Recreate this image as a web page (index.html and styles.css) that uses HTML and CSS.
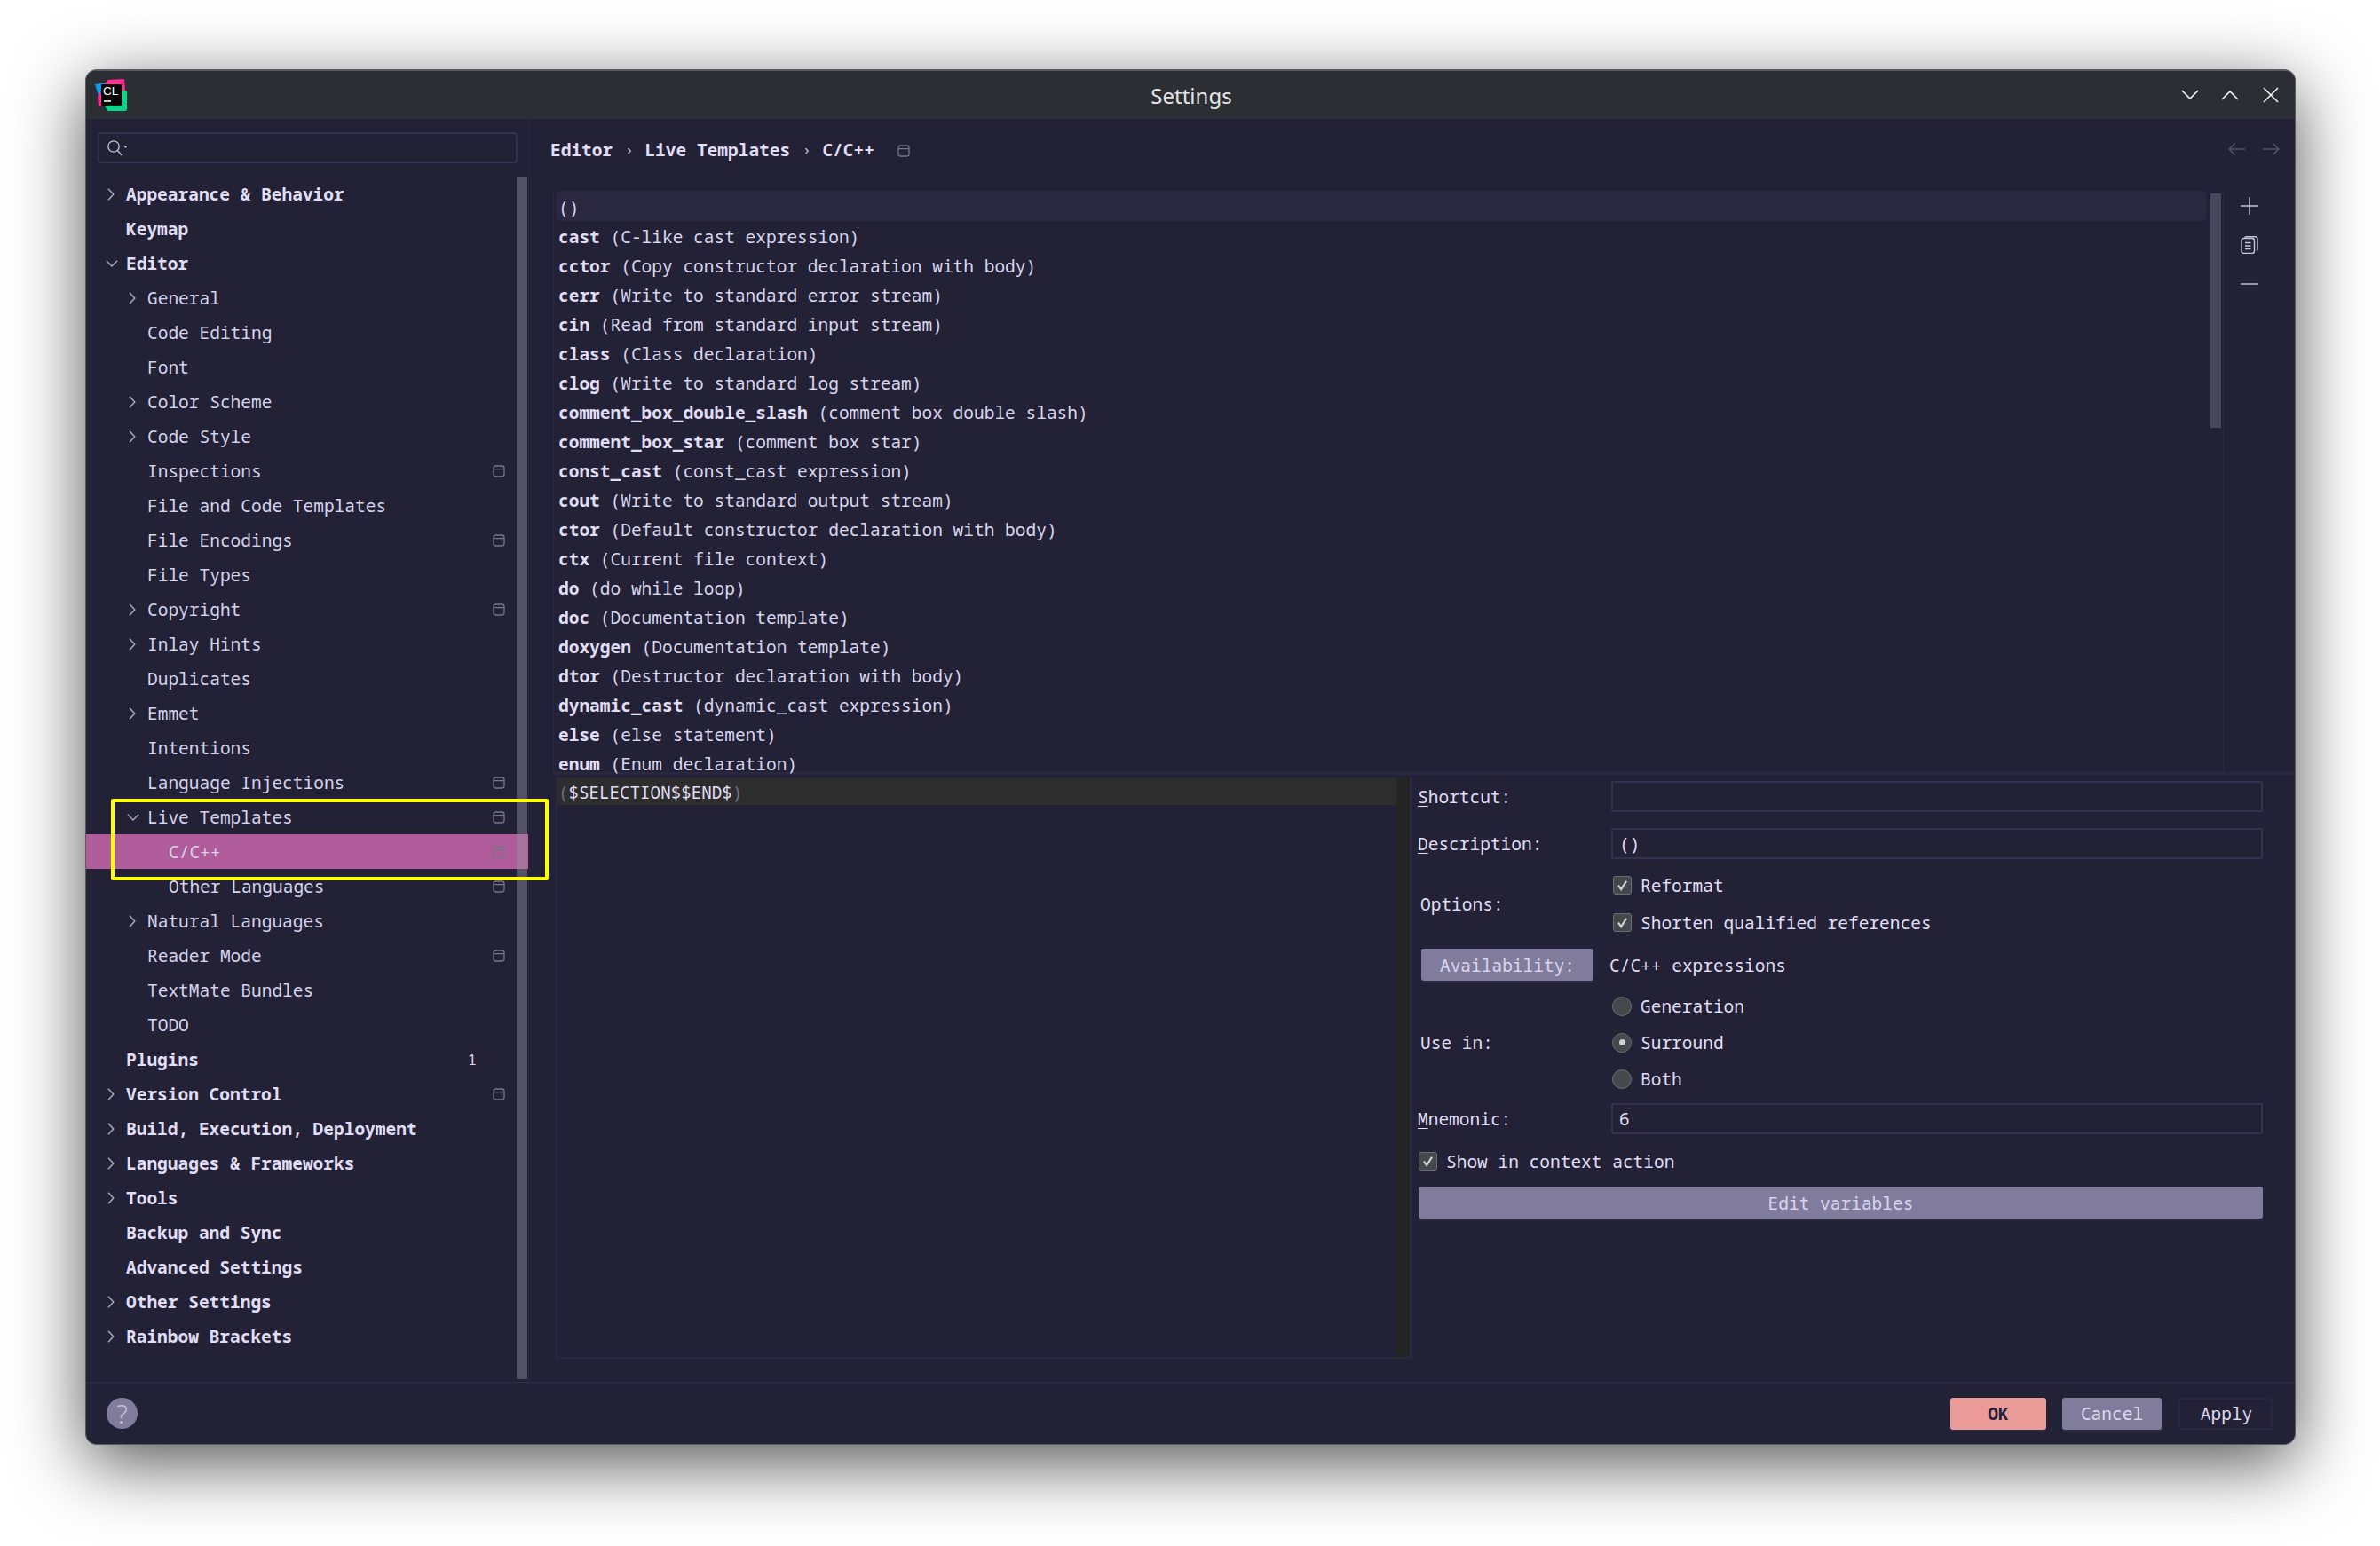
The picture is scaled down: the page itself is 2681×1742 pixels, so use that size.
FILE: index.html
```html
<!DOCTYPE html>
<html lang="en">
<head>
<meta charset="utf-8">
<title>Settings</title>
<link rel="stylesheet" href="styles.css">
</head>
<body>
<svg class="defs" width="0" height="0" aria-hidden="true">
  <symbol id="cr" viewBox="0 0 14 14"><path d="M3 .8 8.8 7 3 13.2" fill="none" stroke="#a9a7bd" stroke-width="1.5"/></symbol>
  <symbol id="cd" viewBox="0 0 14 14"><path d="M.8 3.8 7 10l6.2-6.2" fill="none" stroke="#a9a7bd" stroke-width="1.5"/></symbol>
  <symbol id="proj" viewBox="0 0 14 14"><rect x="1" y="1" width="12" height="12" rx="2.4" fill="none" stroke="#77758a" stroke-width="1.3"/><path d="M1 4.6h12" stroke="#77758a" stroke-width="1.3"/></symbol>
  <symbol id="tick" viewBox="0 0 20 20"><path d="M5.2 10.2 8.6 14.8 14.8 5" fill="none" stroke="#cfd0d4" stroke-width="2.4"/></symbol>
</svg>
<div class="window">
  <header class="titlebar">
    <svg class="logo" viewBox="0 0 36 36" aria-hidden="true">
      <path d="M0 6 22 3 14 28 6 26Z" fill="#0a9be8"/>
      <path d="M14 1 33 0 34 13 22 30 4 31 3 20Z" fill="#ff2d90"/>
      <path d="M17 14 34 13Q36 13 36 15V34Q36 36 34 36H14L11 30Z" fill="#0ad58a"/>
      <rect x="7" y="6" width="23" height="24" fill="#000"/>
      <path d="M10 25h8" stroke="#fff" stroke-width="1.6"/>
      <text x="9" y="18" class="logo-text">CL</text>
    </svg>
    <div class="title">Settings</div>
    <div class="winctl">
      <svg viewBox="0 0 20 14" class="wc" aria-hidden="true"><path d="M1 2l9 9 9-9" /></svg>
      <svg viewBox="0 0 20 14" class="wc" aria-hidden="true"><path d="M1 12l9-9 9 9" /></svg>
      <svg viewBox="0 0 18 18" class="wx" aria-hidden="true"><path d="M1 1l16 16M17 1 1 17" /></svg>
    </div>
  </header>
  <div class="body">
    <aside class="sidebar">
      <div class="search">
        <svg class="search-icon" viewBox="0 0 24 20" aria-hidden="true"><circle cx="8" cy="8" r="6.2" fill="none" stroke="#c9c8d6" stroke-width="1.3"/><path d="M12.5 12.6 17 18" stroke="#c9c8d6" stroke-width="1.3"/><path d="M19 7h5l-2.5 3z" fill="#c9c8d6"/></svg>
      </div>
      <div class="tree">
        <div class="row d0 b"><svg class="ch"><use href="#cr"/></svg><span>Appearance &amp; Behavior</span></div>
        <div class="row d0 b"><span class="ns"></span><span>Keymap</span></div>
        <div class="row d0 b"><svg class="ch"><use href="#cd"/></svg><span>Editor</span></div>
        <div class="row d1"><svg class="ch"><use href="#cr"/></svg><span>General</span></div>
        <div class="row d1"><span class="ns"></span><span>Code Editing</span></div>
        <div class="row d1"><span class="ns"></span><span>Font</span></div>
        <div class="row d1"><svg class="ch"><use href="#cr"/></svg><span>Color Scheme</span></div>
        <div class="row d1"><svg class="ch"><use href="#cr"/></svg><span>Code Style</span></div>
        <div class="row d1"><span class="ns"></span><span>Inspections</span><svg class="pj"><use href="#proj"/></svg></div>
        <div class="row d1"><span class="ns"></span><span>File and Code Templates</span></div>
        <div class="row d1"><span class="ns"></span><span>File Encodings</span><svg class="pj"><use href="#proj"/></svg></div>
        <div class="row d1"><span class="ns"></span><span>File Types</span></div>
        <div class="row d1"><svg class="ch"><use href="#cr"/></svg><span>Copyright</span><svg class="pj"><use href="#proj"/></svg></div>
        <div class="row d1"><svg class="ch"><use href="#cr"/></svg><span>Inlay Hints</span></div>
        <div class="row d1"><span class="ns"></span><span>Duplicates</span></div>
        <div class="row d1"><svg class="ch"><use href="#cr"/></svg><span>Emmet</span></div>
        <div class="row d1"><span class="ns"></span><span>Intentions</span></div>
        <div class="row d1"><span class="ns"></span><span>Language Injections</span><svg class="pj"><use href="#proj"/></svg></div>
        <div class="row d1"><svg class="ch"><use href="#cd"/></svg><span>Live Templates</span><svg class="pj"><use href="#proj"/></svg></div>
        <div class="row d2 sel"><span class="ns"></span><span>C/C++</span><svg class="pj"><use href="#proj"/></svg></div>
        <div class="row d2"><span class="ns"></span><span>Other Languages</span><svg class="pj"><use href="#proj"/></svg></div>
        <div class="row d1"><svg class="ch"><use href="#cr"/></svg><span>Natural Languages</span></div>
        <div class="row d1"><span class="ns"></span><span>Reader Mode</span><svg class="pj"><use href="#proj"/></svg></div>
        <div class="row d1"><span class="ns"></span><span>TextMate Bundles</span></div>
        <div class="row d1"><span class="ns"></span><span>TODO</span></div>
        <div class="row d0 b"><span class="ns"></span><span>Plugins</span><span class="count">1</span></div>
        <div class="row d0 b"><svg class="ch"><use href="#cr"/></svg><span>Version Control</span><svg class="pj"><use href="#proj"/></svg></div>
        <div class="row d0 b"><svg class="ch"><use href="#cr"/></svg><span>Build, Execution, Deployment</span></div>
        <div class="row d0 b"><svg class="ch"><use href="#cr"/></svg><span>Languages &amp; Frameworks</span></div>
        <div class="row d0 b"><svg class="ch"><use href="#cr"/></svg><span>Tools</span></div>
        <div class="row d0 b"><span class="ns"></span><span>Backup and Sync</span></div>
        <div class="row d0 b"><span class="ns"></span><span>Advanced Settings</span></div>
        <div class="row d0 b"><svg class="ch"><use href="#cr"/></svg><span>Other Settings</span></div>
        <div class="row d0 b"><svg class="ch"><use href="#cr"/></svg><span>Rainbow Brackets</span></div>
      </div>
      <div class="side-scroll"></div>
      <div class="highlight"></div>
    </aside>
    <main class="main">
      <div class="crumbs">
        <span class="crumb">Editor</span><span class="sep">›</span><span class="crumb">Live Templates</span><span class="sep">›</span><span class="crumb">C/C++</span>
        <svg class="pj crumb-pj"><use href="#proj"/></svg>
        <div class="nav">
          <svg viewBox="0 0 20 16" aria-hidden="true"><path d="M20 8H1.5M8 1 1.2 8 8 15"/></svg>
          <svg viewBox="0 0 20 16" aria-hidden="true"><path d="M0 8h18.5M12 1l6.8 7L12 15"/></svg>
        </div>
      </div>
      <div class="top">
        <div class="list">
          <div class="item first">()</div>
          <div class="item"><b>cast</b> (C-like cast expression)</div>
          <div class="item"><b>cctor</b> (Copy constructor declaration with body)</div>
          <div class="item"><b>cerr</b> (Write to standard error stream)</div>
          <div class="item"><b>cin</b> (Read from standard input stream)</div>
          <div class="item"><b>class</b> (Class declaration)</div>
          <div class="item"><b>clog</b> (Write to standard log stream)</div>
          <div class="item"><b>comment_box_double_slash</b> (comment box double slash)</div>
          <div class="item"><b>comment_box_star</b> (comment box star)</div>
          <div class="item"><b>const_cast</b> (const_cast expression)</div>
          <div class="item"><b>cout</b> (Write to standard output stream)</div>
          <div class="item"><b>ctor</b> (Default constructor declaration with body)</div>
          <div class="item"><b>ctx</b> (Current file context)</div>
          <div class="item"><b>do</b> (do while loop)</div>
          <div class="item"><b>doc</b> (Documentation template)</div>
          <div class="item"><b>doxygen</b> (Documentation template)</div>
          <div class="item"><b>dtor</b> (Destructor declaration with body)</div>
          <div class="item"><b>dynamic_cast</b> (dynamic_cast expression)</div>
          <div class="item"><b>else</b> (else statement)</div>
          <div class="item"><b>enum</b> (Enum declaration)</div>
          <div class="list-scroll"></div>
        </div>
        <div class="tools">
          <svg viewBox="0 0 20 20" aria-hidden="true"><path d="M10 0v20M0 10h20"/></svg>
          <svg viewBox="0 0 20 20" aria-hidden="true"><rect x="1" y="2.5" width="14.5" height="17" rx="2.5"/><path d="M5 2V1.5Q5 .7 6 .7H16.5Q19 .7 19 3V15Q19 16 18 16M5 7.5h6.5M5 11h6.5M5 14.5h6.5"/></svg>
          <svg viewBox="0 0 20 20" aria-hidden="true"><path d="M0 10h20"/></svg>
        </div>
      </div>
      <div class="bottom">
        <div class="editor">
          <div class="code">
            <div class="curline"><i>(</i>$SELECTION$$END$<i>)</i></div>
          </div>
          <div class="gutter"></div>
        </div>
        <form class="form">
          <div class="f-row h35 mb18"><label class="lab l-tight"><u>S</u>hortcut:</label><div class="input"></div></div>
          <div class="f-row h35 mb8"><label class="lab l-tight"><u>D</u>escription:</label><div class="input indent">()</div></div>
          <div class="f-row h84">
            <label class="lab">Options:</label>
            <div class="stack">
              <div class="opt"><span class="cb"><svg viewBox="0 0 20 20"><use href="#tick"/></svg></span>Reformat</div>
              <div class="opt"><span class="cb"><svg viewBox="0 0 20 20"><use href="#tick"/></svg></span>Shorten qualified references</div>
            </div>
          </div>
          <div class="f-row h36 mt9 mb8"><button type="button" class="btn avail">Availability:</button><span class="avail-text">C/C++ expressions</span></div>
          <div class="f-row h123">
            <label class="lab">Use in:</label>
            <div class="stack">
              <div class="opt o41"><span class="rd"></span>Generation</div>
              <div class="opt o41"><span class="rd on"></span>Surround</div>
              <div class="opt o41"><span class="rd"></span>Both</div>
            </div>
          </div>
          <div class="f-row h35 mt7"><label class="lab l-tight"><u>M</u>nemonic:</label><div class="input">6</div></div>
          <div class="f-row h42 mt9"><div class="opt"><span class="cb cb-left"><svg viewBox="0 0 20 20"><use href="#tick"/></svg></span>Show in context action</div></div>
          <button type="button" class="btn edit">Edit variables</button>
        </form>
      </div>
    </main>
  </div>
  <footer class="footer">
    <div class="help">?</div>
    <div class="actions">
      <button type="button" class="fb ok">OK</button>
      <button type="button" class="fb cancel">Cancel</button>
      <button type="button" class="fb apply">Apply</button>
    </div>
  </footer>
</div>
</body>
</html>
```

FILE: styles.css
```css
* { box-sizing: border-box; }
html, body { margin: 0; padding: 0; height: 1742px; overflow: hidden; background: #fff; }
body { padding: 78px 0 0 96px; font-family: "Noto Sans Mono", "Noto Sans Mono CJK SC", "DejaVu Sans Mono", monospace; font-size: 19.5px; color: #e0def4; }
.defs { position: absolute; }
.window { width: 2490px; height: 1550px; border: 1px solid #5a5b60; border-top: 2px solid #5a5b60; border-radius: 13px; background: #232136; display: flex; flex-direction: column; box-shadow: 0 20px 80px rgba(0,0,0,.68); }
.titlebar { height: 54px; flex: none; background: #2b2e32; display: flex; align-items: center; border-radius: 11px 11px 0 0; padding: 0 18px 0 10px; }
.logo { width: 36px; height: 36px; flex: none; }
.logo-text { font-family: "Liberation Sans", sans-serif; font-size: 13.5px; font-weight: 400; fill: #fff; }
.title { flex: 1; text-align: center; font-family: "Noto Sans", sans-serif; font-size: 24px; color: #e4e4e6; padding-left: 84px; }
.winctl { display: flex; align-items: center; gap: 25px; }
.winctl svg { fill: none; stroke: #f2f2f4; stroke-width: 1.6; display: block; }
.wc { width: 20px; height: 14px; }
.wx { width: 18px; height: 18px; margin-left: 2px; }
.body { flex: 1; display: flex; min-height: 0; }
.sidebar { width: 499px; flex: none; position: relative; border-right: 1px solid #2a283e; padding-top: 15px; }
.search { height: 35px; margin: 0 12px 0 13px; border: 2px solid #353250; border-radius: 4px; display: flex; align-items: center; padding-left: 8px; }
.search-icon { width: 24px; height: 20px; }
.tree { margin-top: 15px; }
.row { height: 39px; display: flex; align-items: center; padding-right: 26px; color: #d5d3ea; white-space: pre; }
.row.b { font-weight: 700; color: #e0def4; }
.d0 { padding-left: 22px; }
.d1 { padding-left: 46px; }
.d2 { padding-left: 70px; }
.row.sel { background: #b05c9b; }
.ch, .ns { width: 14px; height: 14px; margin-right: 9px; flex: none; }
.pj { width: 14px; height: 14px; flex: none; }
.row .pj { margin-left: auto; }
.count { margin-left: auto; font-weight: 400; font-size: 17px; margin-right: 32px; color: #d5d3ea; }
.side-scroll { position: absolute; left: 485px; top: 66px; width: 12px; height: 1354px; background: rgba(150,150,165,.42); }
.highlight { position: absolute; left: 28px; top: 766px; width: 493px; height: 92px; border: 4px solid #ffff00; border-radius: 2px; pointer-events: none; }
.main { flex: 1; min-width: 0; display: flex; flex-direction: column; padding-left: 27px; }
.crumbs { height: 81px; display: flex; align-items: center; padding: 0 17px 13px 0; font-weight: 700; white-space: pre; flex: none; }
.crumb:first-child { margin-left: -3px; }
.sep { font-weight: 400; font-size: 17px; margin: 0 12.5px 0 13.5px; color: #c9c7de; }
.crumb-pj { margin-left: 26px; margin-top: 3px; }
.nav { margin-left: auto; display: flex; gap: 20px; }
.nav svg { width: 19px; height: 16px; fill: none; stroke: #55555f; stroke-width: 1.5; display: block; }
.top { height: 658px; flex: none; display: flex; border-bottom: 3px solid #2a283e; }
.list { width: 1882px; flex: none; position: relative; border-left: 1px solid #2a283e; border-right: 1px solid #2a283e; padding: 0 18px 0 2px; }
.item { height: 33px; display: flex; align-items: center; padding-left: 3px; color: #d8d6ec; white-space: pre; overflow: hidden; }
.item b { color: #e0def4; }
.item.first { height: 34px; background: #2a283e; border-radius: 6px; margin-bottom: 1px; padding-top: 3px; }
.list-scroll { position: absolute; right: 2px; top: 3px; width: 12px; height: 264px; background: #47465a; }
.tools { flex: 1; display: flex; flex-direction: column; align-items: center; padding: 7px 22px 0 0; gap: 24px; margin-left: -1px; }
.tools svg { width: 20px; height: 20px; fill: none; stroke: #c8c7d6; stroke-width: 1.4; display: block; }
.bottom { flex: 1; min-height: 0; display: flex; padding-top: 4px; padding-right: 36px; }
.editor { width: 965px; height: 654px; flex: none; display: flex; border-left: 2px solid #2a283e; border-right: 3px solid #2c2a45; border-bottom: 2px solid #2a283e; margin-left: 3px; }
.code { flex: 1; font-size: 19.2px; }
.curline { height: 30px; background: #2d2d2e; display: flex; align-items: center; padding-left: 1px; white-space: pre; }
.curline i { font-style: normal; color: #6e6a86; }
.gutter { width: 15px; flex: none; background: #252525; }
.form { flex: 1; min-width: 0; padding: 3px 0 0 6px; display: flex; flex-direction: column; }
.f-row { display: flex; align-items: center; flex: none; }
.h35 { height: 35px; } .h36 { height: 36px; } .h42 { height: 42px; } .h84 { height: 84px; } .h123 { height: 123px; }
.mb18 { margin-bottom: 18px; } .mb8 { margin-bottom: 8px; }
.mt9 { margin-top: 9px; } .mt7 { margin-top: 7px; }
.lab { width: 218px; flex: none; padding-left: 3px; }
.l-tight { padding-left: 0; }
.lab u { text-underline-offset: 3px; text-decoration-thickness: 1px; }
.input { flex: 1; height: 35px; border: 2px solid #353250; border-radius: 2px; display: flex; align-items: center; padding-left: 7px; }
.indent { padding-left: 7px; }
.stack { display: flex; flex-direction: column; }
.opt { height: 42px; display: flex; align-items: center; white-space: pre; }
.o41 { height: 41px; }
.cb { width: 21px; height: 21px; border: 1px solid #6c6d70; border-radius: 3px; background: #46494c; margin: 0 10px 0 2px; display: flex; align-items: center; justify-content: center; flex: none; }
.cb svg { width: 19px; height: 19px; display: block; }
.cb-left { margin-left: 1px; }
.rd { width: 22px; height: 22px; border-radius: 50%; border: 1px solid #6c6d70; background: #46494c; margin: 0 10px 0 1px; flex: none; display: flex; align-items: center; justify-content: center; }
.rd.on::after { content: ""; width: 7px; height: 7px; border-radius: 50%; background: #cfd0d4; }
.btn { font: inherit; color: #d8d6ec; background: #817c9c; border: 0; border-radius: 3px; box-shadow: 0 3px 0 #2a283e; padding: 0; }
.avail { width: 194px; height: 36px; margin-left: 4px; }
.avail-text { margin-left: 18px; }
.edit { height: 36px; margin: 8px 0 0 1px; flex: none; }
.footer { height: 70px; flex: none; border-top: 1px solid #2f2d45; display: flex; align-items: center; justify-content: space-between; padding: 0 25px 0 23px; }
.help { width: 35px; height: 35px; border-radius: 50%; background: #817c9c; color: #c4c1d6; font-family: "Noto Sans", sans-serif; font-size: 30px; font-weight: 300; display: flex; align-items: center; justify-content: center; }
.actions { display: flex; gap: 18px; }
.fb { font: inherit; height: 36px; border-radius: 3px; padding: 0; border: 0; }
.ok { width: 108px; background: #ea9a97; color: #232136; font-weight: 700; box-shadow: 0 3px 0 #2a283e; }
.cancel { width: 112px; background: #817c9c; color: #dcdaee; box-shadow: 0 3px 0 #2a283e; }
.apply { width: 106px; margin-left: 1px; padding-left: 2px; background: transparent; color: #dcdaee; border: 2px solid #2a283e; }
```
